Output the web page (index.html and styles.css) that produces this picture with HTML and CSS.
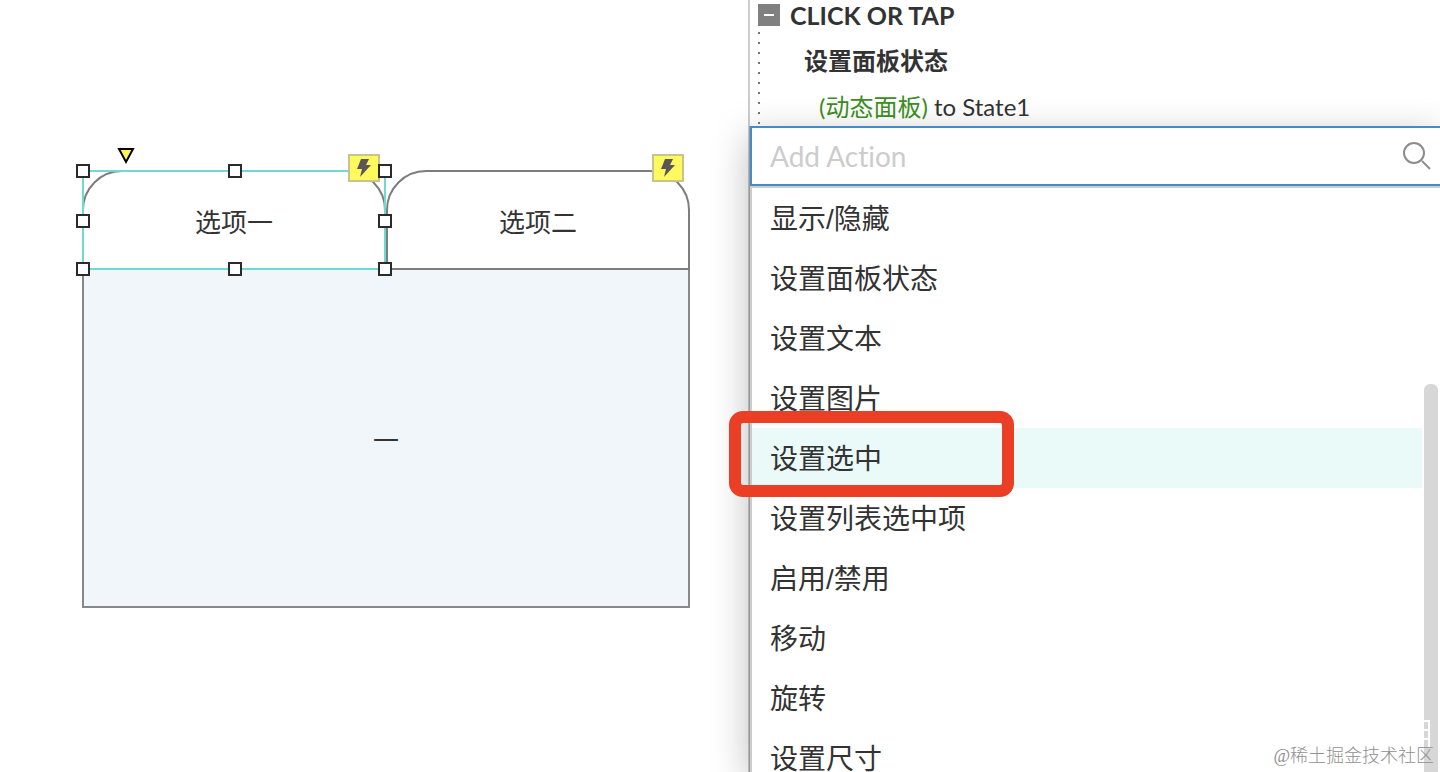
FILE: index.html
```html
<!DOCTYPE html>
<html lang="zh-CN">
<head>
  <meta charset="UTF-8" />
  <meta name="viewport" content="width=device-width, initial-scale=1.0"/>
  <title>设置选中</title>
  <link rel="stylesheet" href="styles.css">
</head>
<body>

  <main class="canvas">
    <div class="widget">
      <div class="tabs">
        <div class="tab-wrap">
          <button type="button" class="tab">选项一</button>
          <div class="selection">
            <span class="handle top left"></span>
            <span class="handle top center"></span>
            <span class="handle top right"></span>
            <span class="handle middle left"></span>
            <span class="handle middle right"></span>
            <span class="handle bottom left"></span>
            <span class="handle bottom center"></span>
            <span class="handle bottom right"></span>
          </div>
          <svg class="radius-grip" width="18" height="18" viewBox="0 0 18 18">
            <path d="M2 2H16L9 15Z" fill="#fff35c" stroke="#000" stroke-width="2"/>
          </svg>
          <span class="event-badge">
            <svg width="14" height="20" viewBox="0 0 14 20"><path d="M4 1H12L9 7H14L3 19L5 11H0Z" fill="#5c5556"/></svg>
          </span>
        </div>
        <div class="tab-wrap">
          <button type="button" class="tab">选项二</button>
          <span class="event-badge">
            <svg width="14" height="20" viewBox="0 0 14 20"><path d="M4 1H12L9 7H14L3 19L5 11H0Z" fill="#5c5556"/></svg>
          </span>
        </div>
      </div>
      <div class="state">一</div>
    </div>
  </main>

  <aside class="inspector">
    <section class="events">
      <div class="event-head">
        <button type="button" class="toggle" aria-label="Collapse"></button>
        <h2>CLICK OR TAP</h2>
      </div>
      <div class="event-body">
        <h3>设置面板状态</h3>
        <p><span class="target">(动态面板)</span> to State1</p>
      </div>
    </section>

    <div class="picker">
      <div class="search">
        <input type="text" placeholder="Add Action" aria-label="Add Action" />
        <svg width="30" height="30" viewBox="0 0 30 30" fill="none" stroke="#8c8c8c" stroke-width="2">
          <circle cx="12" cy="12" r="10"/><path d="M20 20L28 28"/>
        </svg>
      </div>
      <ul class="actions">
        <li><button type="button">显示/隐藏</button></li>
        <li><button type="button">设置面板状态</button></li>
        <li><button type="button">设置文本</button></li>
        <li><button type="button">设置图片</button></li>
        <li class="active"><button type="button">设置选中</button><span class="mark"></span></li>
        <li><button type="button">设置列表选中项</button></li>
        <li><button type="button">启用/禁用</button></li>
        <li><button type="button">移动</button></li>
        <li><button type="button">旋转</button></li>
        <li><button type="button">设置尺寸</button></li>
      </ul>
      <div class="scrollbar"></div>
    </div>
  </aside>

  <svg class="stamp" width="8" height="34" viewBox="0 0 8 34" fill="none" stroke="#fff" stroke-width="2">
    <path d="M0 1H5V28M0 10H5M0 19H5"/>
  </svg>
  <div class="watermark">@稀土掘金技术社区</div>

</body>
</html>
```

FILE: styles.css
```css
* { box-sizing: border-box; }
body {
  margin: 0;
  height: 100vh;
  display: flex;
  overflow: hidden;
  position: relative;
  background: #fff;
  color: #333;
  font-family: "Liberation Sans", "Noto Sans CJK SC", sans-serif;
}
button { font: inherit; color: inherit; cursor: pointer; }
h2, h3, p, ul { margin: 0; padding: 0; }

/* canvas */
.canvas { flex: 0 0 748px; padding: 170px 58px 0 82px; }
.tabs { display: flex; }
.tab-wrap { flex: 1; position: relative; }
.tab {
  display: block;
  width: 100%;
  height: 100px;
  padding: 0;
  background: #fff;
  border: 2px solid #7d7d7d;
  border-radius: 40px 40px 0 0;
  font-size: 26px;
}
.state {
  display: flex;
  align-items: center;
  justify-content: center;
  height: 340px;
  margin-top: -2px;
  background: #f1f6fa;
  border: 2px solid #85898b;
  font-size: 26px;
}
.selection { position: absolute; inset: 0; border: 2px solid #6ddbd1; }
.handle {
  position: absolute;
  z-index: 3;
  width: 14px;
  height: 14px;
  background: #fff;
  border: 2px solid #2b2b2d;
}
.top { top: -8px; }
.middle { top: 42px; }
.bottom { bottom: -8px; }
.left { left: -8px; }
.center { left: 144px; }
.right { right: -8px; }
.radius-grip { position: absolute; left: 35px; top: -23px; }
.event-badge {
  position: absolute;
  z-index: 2;
  right: 6px;
  top: -16px;
  width: 32px;
  height: 28px;
  display: flex;
  align-items: center;
  justify-content: center;
  background: #fff960;
  border: 2px solid #c8c58c;
}

/* inspector */
.inspector { flex: 1; min-width: 0; display: flex; flex-direction: column; border-left: 2px solid #ccc; }
.events {
  flex: none;
  padding: 4px 8px 0;
  line-height: 46px;
  font-family: Lato, "Noto Sans CJK SC", sans-serif;
}
.event-head { display: flex; align-items: center; gap: 10px; height: 22px; }
.event-head h2 { font-size: 25px; line-height: 22px; }
.toggle {
  width: 22px;
  height: 22px;
  padding: 0;
  border: 0;
  background: linear-gradient(#fff, #fff) center / 10px 2px no-repeat #808080;
}
.event-body {
  height: 100px;
  padding: 12px 0 0 46px;
  font-size: 24px;
  background: repeating-linear-gradient(transparent 0 6px, #777 6px 8px, transparent 8px 10px) 0 0 / 2px 100% no-repeat;
}
.event-body h3 { font-size: 24px; }
.event-body p { padding-left: 15px; }
.target { color: #3c8f22; }

.picker {
  flex: 1;
  min-height: 0;
  position: relative;
  margin-left: -1px;
  background: #fff;
  border-left: 1px solid #999;
  box-shadow: 0 10px 36px rgba(0, 0, 0, .26);
}
.search {
  display: flex;
  align-items: center;
  height: 60px;
  padding: 0 8px 0 18px;
  border: solid #468bc9;
  border-width: 2px 0 2px 2px;
}
.search input {
  flex: 1;
  min-width: 0;
  padding: 0;
  border: 0;
  outline: 0;
  background: none;
  font: 28px Lato, sans-serif;
  font-variant-ligatures: none;
}
.search input::placeholder { color: #ccc; opacity: 1; }
.actions { list-style: none; border-top: 2px solid #ccc; border-left: 2px solid #ccc; }
.actions li { position: relative; margin-right: 18px; }
.actions button {
  display: block;
  width: 100%;
  height: 60px;
  padding: 0 18px 2px;
  border: 0;
  background: none;
  text-align: left;
  font-size: 28px;
}
.actions .active { background: #eafaf9; }
.mark {
  position: absolute;
  left: -23px;
  top: -17px;
  width: 285px;
  height: 86px;
  border: 12px solid #ea3e25;
  border-radius: 14px;
}
.scrollbar {
  position: absolute;
  top: 258px;
  right: 2px;
  bottom: 0;
  width: 14px;
  background: #d7d7d7;
  border-radius: 6px 6px 0 0;
}

.stamp { position: absolute; right: 8px; bottom: 18px; }
.watermark {
  position: absolute;
  right: 6px;
  bottom: 4px;
  color: #8f8f8f;
  font: 300 18px/24px "Liberation Serif", "Noto Sans CJK SC", serif;
}
```
